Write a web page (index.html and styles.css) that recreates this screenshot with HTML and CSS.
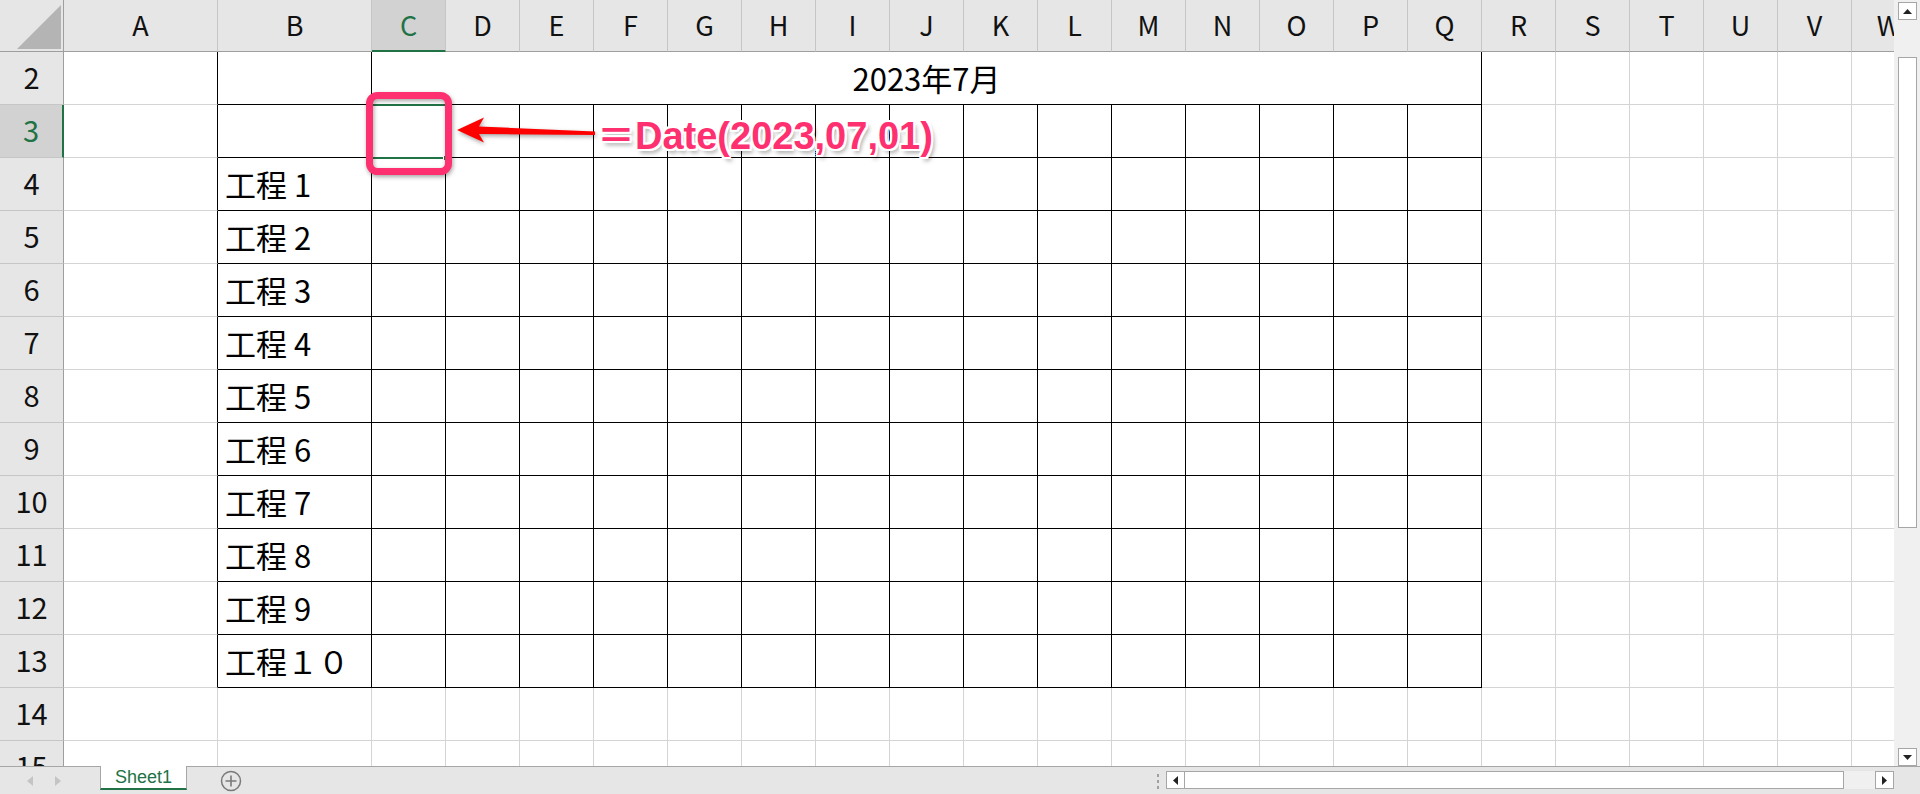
FILE: index.html
```html
<!DOCTYPE html>
<html lang="ja">
<head>
<meta charset="utf-8">
<title>Sheet1</title>
<link rel="stylesheet" href="styles.css">
</head>
<body>
<div class="app">
  <div class="main">
    <div class="sheet">
      <div class="grid">
        <div class="ch corner"><svg width="63" height="51" viewBox="0 0 63 51"><polygon points="17,49 61,49 61,5" fill="#b4b4b4"/></svg></div>
        <div class="ch">A</div><div class="ch">B</div><div class="ch sel">C</div><div class="ch">D</div><div class="ch">E</div><div class="ch">F</div><div class="ch">G</div><div class="ch">H</div><div class="ch">I</div><div class="ch">J</div><div class="ch">K</div><div class="ch">L</div><div class="ch">M</div><div class="ch">N</div><div class="ch">O</div><div class="ch">P</div><div class="ch">Q</div><div class="ch">R</div><div class="ch">S</div><div class="ch">T</div><div class="ch">U</div><div class="ch">V</div><div class="ch">W</div>

        <div class="rh">2</div><div class="c tl"></div><div class="c t"></div><div class="c t merged">2023年7月</div><div class="c"></div><div class="c"></div><div class="c"></div><div class="c"></div><div class="c"></div><div class="c"></div>

        <div class="rh sel">3</div><div class="c tl"></div><div class="c t"></div>
        <div class="c t"></div><div class="c t"></div><div class="c t"></div><div class="c t"></div><div class="c t"></div><div class="c t"></div><div class="c t"></div><div class="c t"></div><div class="c t"></div><div class="c t"></div><div class="c t"></div><div class="c t"></div><div class="c t"></div><div class="c t"></div><div class="c t"></div>
        <div class="c"></div><div class="c"></div><div class="c"></div><div class="c"></div><div class="c"></div><div class="c"></div>

        <div class="rh">4</div><div class="c tl"></div><div class="c t lbl">工程 1</div>
        <div class="c t"></div><div class="c t"></div><div class="c t"></div><div class="c t"></div><div class="c t"></div><div class="c t"></div><div class="c t"></div><div class="c t"></div><div class="c t"></div><div class="c t"></div><div class="c t"></div><div class="c t"></div><div class="c t"></div><div class="c t"></div><div class="c t"></div>
        <div class="c"></div><div class="c"></div><div class="c"></div><div class="c"></div><div class="c"></div><div class="c"></div>

        <div class="rh">5</div><div class="c tl"></div><div class="c t lbl">工程 2</div>
        <div class="c t"></div><div class="c t"></div><div class="c t"></div><div class="c t"></div><div class="c t"></div><div class="c t"></div><div class="c t"></div><div class="c t"></div><div class="c t"></div><div class="c t"></div><div class="c t"></div><div class="c t"></div><div class="c t"></div><div class="c t"></div><div class="c t"></div>
        <div class="c"></div><div class="c"></div><div class="c"></div><div class="c"></div><div class="c"></div><div class="c"></div>

        <div class="rh">6</div><div class="c tl"></div><div class="c t lbl">工程 3</div>
        <div class="c t"></div><div class="c t"></div><div class="c t"></div><div class="c t"></div><div class="c t"></div><div class="c t"></div><div class="c t"></div><div class="c t"></div><div class="c t"></div><div class="c t"></div><div class="c t"></div><div class="c t"></div><div class="c t"></div><div class="c t"></div><div class="c t"></div>
        <div class="c"></div><div class="c"></div><div class="c"></div><div class="c"></div><div class="c"></div><div class="c"></div>

        <div class="rh">7</div><div class="c tl"></div><div class="c t lbl">工程 4</div>
        <div class="c t"></div><div class="c t"></div><div class="c t"></div><div class="c t"></div><div class="c t"></div><div class="c t"></div><div class="c t"></div><div class="c t"></div><div class="c t"></div><div class="c t"></div><div class="c t"></div><div class="c t"></div><div class="c t"></div><div class="c t"></div><div class="c t"></div>
        <div class="c"></div><div class="c"></div><div class="c"></div><div class="c"></div><div class="c"></div><div class="c"></div>

        <div class="rh">8</div><div class="c tl"></div><div class="c t lbl">工程 5</div>
        <div class="c t"></div><div class="c t"></div><div class="c t"></div><div class="c t"></div><div class="c t"></div><div class="c t"></div><div class="c t"></div><div class="c t"></div><div class="c t"></div><div class="c t"></div><div class="c t"></div><div class="c t"></div><div class="c t"></div><div class="c t"></div><div class="c t"></div>
        <div class="c"></div><div class="c"></div><div class="c"></div><div class="c"></div><div class="c"></div><div class="c"></div>

        <div class="rh">9</div><div class="c tl"></div><div class="c t lbl">工程 6</div>
        <div class="c t"></div><div class="c t"></div><div class="c t"></div><div class="c t"></div><div class="c t"></div><div class="c t"></div><div class="c t"></div><div class="c t"></div><div class="c t"></div><div class="c t"></div><div class="c t"></div><div class="c t"></div><div class="c t"></div><div class="c t"></div><div class="c t"></div>
        <div class="c"></div><div class="c"></div><div class="c"></div><div class="c"></div><div class="c"></div><div class="c"></div>

        <div class="rh">10</div><div class="c tl"></div><div class="c t lbl">工程 7</div>
        <div class="c t"></div><div class="c t"></div><div class="c t"></div><div class="c t"></div><div class="c t"></div><div class="c t"></div><div class="c t"></div><div class="c t"></div><div class="c t"></div><div class="c t"></div><div class="c t"></div><div class="c t"></div><div class="c t"></div><div class="c t"></div><div class="c t"></div>
        <div class="c"></div><div class="c"></div><div class="c"></div><div class="c"></div><div class="c"></div><div class="c"></div>

        <div class="rh">11</div><div class="c tl"></div><div class="c t lbl">工程 8</div>
        <div class="c t"></div><div class="c t"></div><div class="c t"></div><div class="c t"></div><div class="c t"></div><div class="c t"></div><div class="c t"></div><div class="c t"></div><div class="c t"></div><div class="c t"></div><div class="c t"></div><div class="c t"></div><div class="c t"></div><div class="c t"></div><div class="c t"></div>
        <div class="c"></div><div class="c"></div><div class="c"></div><div class="c"></div><div class="c"></div><div class="c"></div>

        <div class="rh">12</div><div class="c tl"></div><div class="c t lbl">工程 9</div>
        <div class="c t"></div><div class="c t"></div><div class="c t"></div><div class="c t"></div><div class="c t"></div><div class="c t"></div><div class="c t"></div><div class="c t"></div><div class="c t"></div><div class="c t"></div><div class="c t"></div><div class="c t"></div><div class="c t"></div><div class="c t"></div><div class="c t"></div>
        <div class="c"></div><div class="c"></div><div class="c"></div><div class="c"></div><div class="c"></div><div class="c"></div>

        <div class="rh">13</div><div class="c tl"></div><div class="c t lbl">工程１０</div>
        <div class="c t"></div><div class="c t"></div><div class="c t"></div><div class="c t"></div><div class="c t"></div><div class="c t"></div><div class="c t"></div><div class="c t"></div><div class="c t"></div><div class="c t"></div><div class="c t"></div><div class="c t"></div><div class="c t"></div><div class="c t"></div><div class="c t"></div>
        <div class="c"></div><div class="c"></div><div class="c"></div><div class="c"></div><div class="c"></div><div class="c"></div>

        <div class="rh">14</div><div class="c"></div><div class="c"></div>
        <div class="c"></div><div class="c"></div><div class="c"></div><div class="c"></div><div class="c"></div><div class="c"></div><div class="c"></div><div class="c"></div><div class="c"></div><div class="c"></div><div class="c"></div><div class="c"></div><div class="c"></div><div class="c"></div><div class="c"></div>
        <div class="c"></div><div class="c"></div><div class="c"></div><div class="c"></div><div class="c"></div><div class="c"></div>

        <div class="rh">15</div><div class="c"></div><div class="c"></div>
        <div class="c"></div><div class="c"></div><div class="c"></div><div class="c"></div><div class="c"></div><div class="c"></div><div class="c"></div><div class="c"></div><div class="c"></div><div class="c"></div><div class="c"></div><div class="c"></div><div class="c"></div><div class="c"></div><div class="c"></div>
        <div class="c"></div><div class="c"></div><div class="c"></div><div class="c"></div><div class="c"></div><div class="c"></div>
      </div>

      <div class="selection"><span class="handle"></span></div>
      <svg class="annot" width="640" height="200" viewBox="0 0 640 200">
        <rect x="369.5" y="95.5" width="79" height="76" rx="8" ry="8" fill="none" stroke="#ff3070" stroke-width="7"/>
        <polygon points="457,130 484,117.5 479,126.5 595,131.5 595,135 479,134 484,142.5" fill="#ff0000"/>
      </svg>
      <div class="formula">＝Date(2023,07,01)</div>
    </div>

    <div class="vscroll">
      <div class="sbtn up"><svg width="9" height="5" viewBox="0 0 9 5"><polygon points="0,5 9,5 4.5,0" fill="#222"/></svg></div>
      <div class="vthumb"></div>
      <div class="sbtn down"><svg width="9" height="5" viewBox="0 0 9 5"><polygon points="0,0 9,0 4.5,5" fill="#222"/></svg></div>
    </div>
  </div>

  <div class="bottom">
    <div class="nav">
      <svg width="6" height="10" viewBox="0 0 6 10"><polygon points="6,0 6,10 0,5" fill="#c4c4c4"/></svg>
      <svg width="6" height="10" viewBox="0 0 6 10"><polygon points="0,0 0,10 6,5" fill="#c4c4c4"/></svg>
    </div>
    <div class="tab">Sheet1</div>
    <div class="addsheet"><svg width="22" height="22" viewBox="0 0 22 22"><circle cx="11" cy="11" r="9.5" fill="none" stroke="#7a7a7a" stroke-width="1.5"/><path d="M11 5.5v11M5.5 11h11" stroke="#7a7a7a" stroke-width="1.6"/></svg></div>
    <div class="spacer"></div>
    <div class="dots"><span></span><span></span><span></span></div>
    <div class="hscroll">
      <div class="sbtn left"><svg width="5" height="9" viewBox="0 0 5 9"><polygon points="5,0 5,9 0,4.5" fill="#222"/></svg></div>
      <div class="hthumb"></div>
      <div class="htrack"></div>
      <div class="sbtn right"><svg width="5" height="9" viewBox="0 0 5 9"><polygon points="0,0 0,9 5,4.5" fill="#222"/></svg></div>
    </div>
    <div class="corner2"></div>
  </div>
</div>
</body>
</html>
```

FILE: styles.css
```css
* { box-sizing: border-box; margin: 0; padding: 0; }
html, body { width: 1920px; height: 794px; overflow: hidden; background: #fff; }
body { font-family: "Noto Sans CJK JP", "Noto Sans", sans-serif; color: #000; }

.app { display: flex; flex-direction: column; width: 1920px; height: 794px; }
.main { display: flex; height: 766px; }
.sheet { position: relative; width: 1894px; height: 766px; overflow: hidden; }

.grid {
  display: grid;
  grid-template-columns: 64px 154px 154px repeat(21, 74px);
  grid-template-rows: 52px repeat(14, 53px);
  width: 1926px;
}

.ch {
  background: #e6e6e6;
  border-right: 1px solid #c6c6c6;
  border-bottom: 1px solid #9e9e9e;
  display: flex; align-items: center; justify-content: center;
  font-family: "Noto Sans CJK JP", "Noto Sans", sans-serif;
  font-size: 27px; line-height: 1; color: #111;
  padding-bottom: 2px;
}
.ch.corner { border-right-color: #9e9e9e; padding: 0; align-items: flex-start; justify-content: flex-start; }
.ch.sel { background: #d2d2d2; color: #217346; border-bottom: 2px solid #217346; }

.rh {
  background: #e6e6e6;
  border-right: 1px solid #9e9e9e;
  border-bottom: 1px solid #c6c6c6;
  display: flex; align-items: center; justify-content: center;
  font-size: 29px; line-height: 1; color: #111;
  padding-bottom: 3px;
}
.rh.sel { background: #d2d2d2; color: #217346; border-right: 2px solid #217346; }

.c { border-right: 1px solid #d4d4d4; border-bottom: 1px solid #d4d4d4; }
.c.tl { border-right-color: #000; }
.c.t { border-right-color: #000; border-bottom-color: #000; }
.c.merged {
  grid-column: span 15;
  display: flex; align-items: center; justify-content: center;
  font-size: 31px; line-height: 1; padding-bottom: 2px;
}
.c.lbl {
  display: flex; align-items: center;
  padding-left: 7px; padding-bottom: 2px;
  font-size: 31px; line-height: 1; white-space: pre;
}

.selection {
  position: absolute; left: 371px; top: 104px; width: 76px; height: 55px;
  border: 2px solid #217346;
}
.selection .handle {
  position: absolute; right: -4px; bottom: -4px; width: 6px; height: 6px;
  background: #217346; border: 1px solid #fff;
}

.annot { position: absolute; left: 0; top: 0; filter: drop-shadow(1px 2px 2px rgba(0,0,0,0.35)); }

.formula {
  position: absolute; left: 597px; top: 117px;
  font-family: "Liberation Sans", "Noto Sans CJK JP", sans-serif;
  font-weight: bold; font-size: 38px; line-height: 38px;
  color: #ff3070; white-space: nowrap;
  text-shadow:
    2px 0 0 #fff, -2px 0 0 #fff, 0 2px 0 #fff, 0 -2px 0 #fff,
    2px 2px 0 #fff, -2px -2px 0 #fff, 2px -2px 0 #fff, -2px 2px 0 #fff,
    3px 4px 4px rgba(0,0,0,0.35);
}

.vscroll {
  width: 26px; height: 766px; background: #f0f0f0;
  display: flex; flex-direction: column; padding: 2px 3px 0 4px;
}
.sbtn {
  background: #fff; border: 1px solid #a6a6a6;
  display: flex; align-items: center; justify-content: center;
  flex: none;
}
.vscroll .sbtn { width: 19px; height: 18px; }
.vscroll .up { margin-bottom: 37px; }
.vthumb { width: 19px; height: 471px; background: #fff; border: 1px solid #a6a6a6; flex: none; }
.vscroll .down { margin-top: auto; }

.bottom {
  height: 28px; background: #e6e6e6; border-top: 1px solid #a6a6a6;
  display: flex; align-items: flex-start;
}
.nav { width: 100px; height: 27px; display: flex; align-items: center; gap: 22px; padding-left: 27px; }
.tab {
  width: 87px; height: 24px; margin-top: -1px;
  background: #fff; border-left: 1px solid #a6a6a6; border-right: 1px solid #a6a6a6;
  border-bottom: 2px solid #217346;
  font-family: "Liberation Sans", sans-serif; font-size: 18px; line-height: 22px;
  color: #217346; text-align: center;
}
.addsheet { margin-left: 33px; margin-top: 3px; width: 22px; height: 22px; }
.spacer { flex: 1; }
.dots { width: 16px; height: 27px; display: flex; flex-direction: column; align-items: center; gap: 3px; padding-top: 7px; }
.dots span { width: 2px; height: 3px; background: #a0a0a0; }
.hscroll { display: flex; width: 728px; height: 18px; margin-top: 4px; }
.hscroll .sbtn { width: 19px; height: 18px; }
.hthumb { width: 659px; height: 18px; background: #fff; border: 1px solid #a6a6a6; border-left: none; }
.htrack { flex: 1; background: #f0f0f0; }
.corner2 { width: 26px; }
```
